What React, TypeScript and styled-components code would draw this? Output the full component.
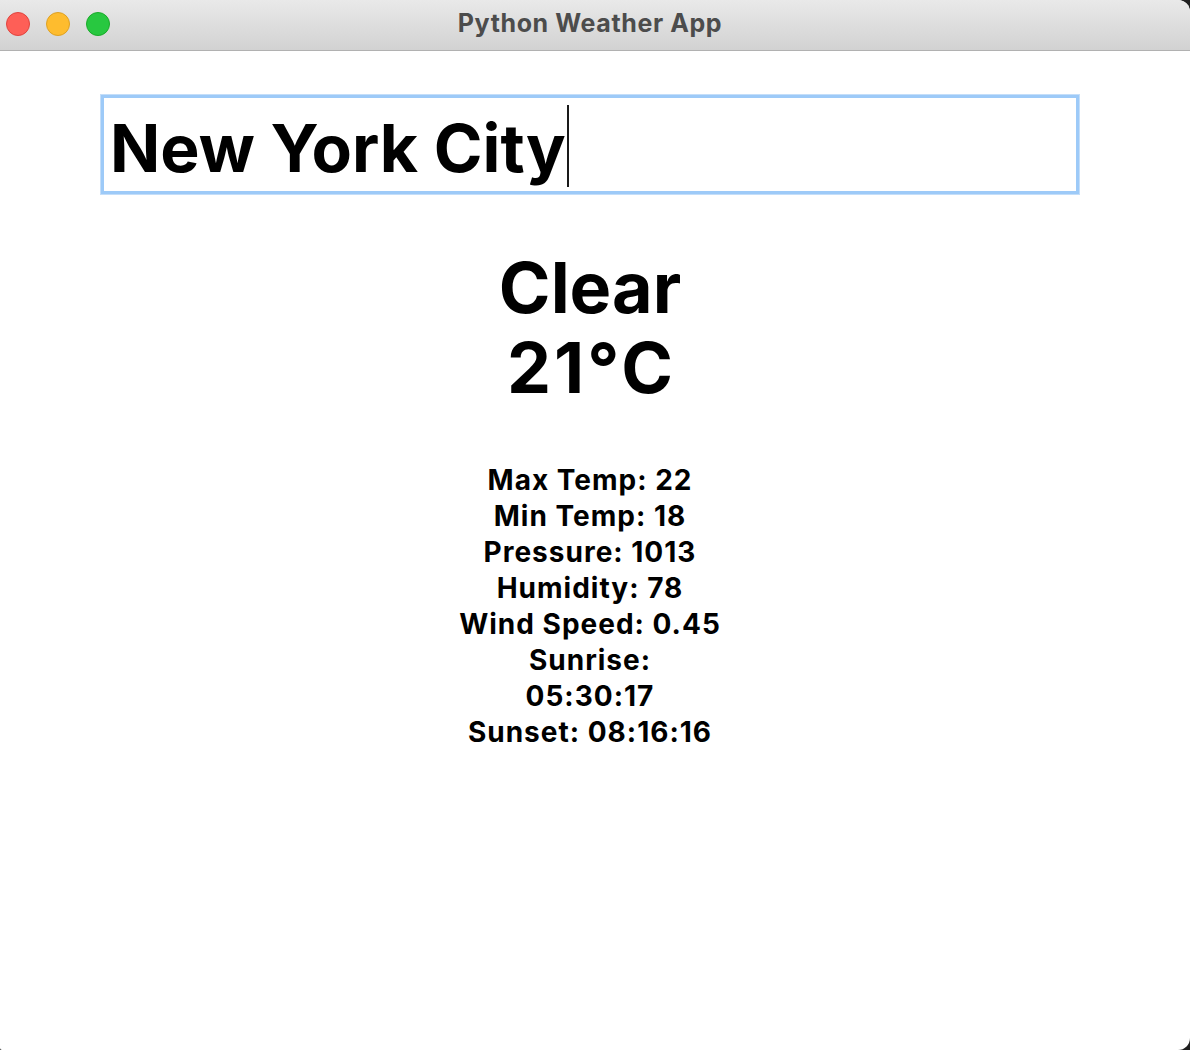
import React from 'react';
import styled, { createGlobalStyle } from 'styled-components';

const GlobalStyle = createGlobalStyle`
  html, body {
    margin: 0;
    padding: 0;
    background: #1f1f1f;
  }
  body {
    font-family: Inter, "Noto Sans", "Liberation Sans", sans-serif;
  }
`;

const weather = {
  city: 'New York City',
  condition: 'Clear',
  temperature: '21°C',
  details: [
    'Max Temp: 22',
    'Min Temp: 18',
    'Pressure: 1013',
    'Humidity: 78',
    'Wind Speed: 0.45',
    'Sunrise:',
    '05:30:17',
    'Sunset: 08:16:16',
  ],
};

const lights = ['#fe5f57', '#febc2e', '#28c840'];
const lightBorders = ['#e0443e', '#dea123', '#1aab29'];

export default function App() {
  return (
    <>
      <GlobalStyle />
      <Window>
        <TitleBar>
          <Lights>
            {lights.map((c, i) => (
              <Light key={c} color={c} edge={lightBorders[i]} />
            ))}
          </Lights>
          <Title>Python Weather App</Title>
        </TitleBar>
        <Content>
          <CityField>
            <CityText>{weather.city}</CityText>
            <Caret />
          </CityField>
          <Condition>
            <div>{weather.condition}</div>
            <Temperature>{weather.temperature}</Temperature>
          </Condition>
          <Details>
            {weather.details.map((line) => (
              <div key={line}>{line}</div>
            ))}
          </Details>
        </Content>
      </Window>
    </>
  );
}

const Window = styled.div`
  width: 1190px;
  height: 1050px;
  background: #ffffff;
  border-radius: 0 12px 12px 2px;
  overflow: hidden;
  display: flex;
  flex-direction: column;
`;

const TitleBar = styled.div`
  position: relative;
  height: 50px;
  flex-shrink: 0;
  background: linear-gradient(#e9e9e9, #d2d2d2);
  border-bottom: 1px solid #b1b1b1;
  display: flex;
  align-items: center;
  justify-content: center;
  padding-right: 10px;
`;

const Lights = styled.div`
  position: absolute;
  left: 6px;
  top: 12px;
  display: flex;
  gap: 16px;
`;

const Light = styled.span<{ color: string; edge: string }>`
  width: 22px;
  height: 22px;
  border-radius: 50%;
  background: ${(p) => p.color};
  border: 1px solid ${(p) => p.edge};
`;

const Title = styled.div`
  font-size: 25px;
  font-weight: 700;
  color: #4c4c4c;
  letter-spacing: 0.6px;
  margin-top: -4px;
`;

const Content = styled.div`
  display: flex;
  flex-direction: column;
  align-items: center;
  padding-top: 44px;
  padding-right: 10px;
`;

const CityField = styled.div`
  box-sizing: border-box;
  width: 978px;
  height: 99px;
  border: 3px solid #9dcaf8;
  box-shadow: 0 0 0 1px #c4def9;
  padding-left: 6px;
  display: flex;
  align-items: center;
`;

const CityText = styled.span`
  font-size: 66px;
  font-weight: 700;
  color: #000;
  line-height: 1;
  margin-top: 6px;
`;

const Caret = styled.span`
  width: 2px;
  height: 82px;
  background: #1a1a1a;
  margin-left: 1px;
  margin-top: 3px;
`;

const Condition = styled.div`
  margin-top: 54px;
  font-size: 70px;
  font-weight: 700;
  line-height: 80px;
  color: #000;
  text-align: center;
`;

const Temperature = styled.div`
  letter-spacing: 3px;
  margin-right: -3px;
`;

const Details = styled.div`
  margin-top: 54px;
  font-size: 28px;
  font-weight: 700;
  letter-spacing: 1px;
  line-height: 36px;
  color: #000;
  text-align: center;
`;
